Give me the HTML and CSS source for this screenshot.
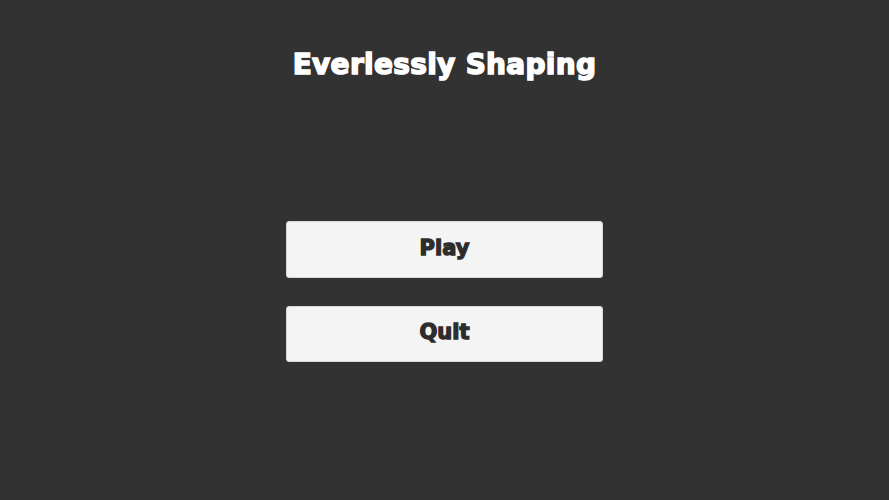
FILE: index.html
```html
<!DOCTYPE html>
<html>
<head>
<meta charset="utf-8">
<link rel="stylesheet" href="styles.css">
</head>
<body>
<div class="screen">
  <h1 class="title">Everlessly Shaping</h1>
  <div class="menu">
    <button class="btn">Play</button>
    <button class="btn">Quit</button>
  </div>
</div>
</body>
</html>
```
FILE: styles.css
```css
html, body {
  margin: 0;
  padding: 0;
  background: #323232;
}
.screen {
  width: 889px;
  height: 500px;
  display: flex;
  flex-direction: column;
  align-items: center;
  font-family: "DejaVu Sans", sans-serif;
}
.title {
  margin: 47px 0 0 0;
  height: 36px;
  line-height: 36px;
  font-size: 28px;
  font-weight: 700;
  color: #ffffff;
  -webkit-text-stroke: 1.5px #ffffff;
  letter-spacing: 0.3px;
}
.menu {
  margin-top: 138px;
  display: flex;
  flex-direction: column;
  gap: 28px;
}
.btn {
  width: 317px;
  height: 57px;
  background: #f4f4f4;
  border: 1px solid #d8d8d8;
  border-radius: 3px;
  font-family: "DejaVu Sans", sans-serif;
  font-size: 21px;
  font-weight: 700;
  color: #2d2d2d;
  -webkit-text-stroke: 1.3px #2d2d2d;
  padding: 0 0 4px 0;
}
.btn + .btn {
  height: 56px;
}
```
